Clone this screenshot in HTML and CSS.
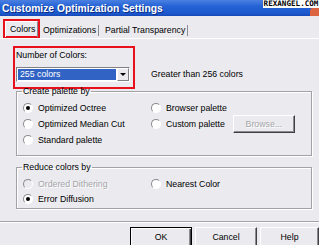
FILE: index.html
```html
<!DOCTYPE html>
<html lang="en">
<head>
<meta charset="UTF-8">
<meta name="viewport" content="width=device-width, initial-scale=1.0">
<title>Customize Optimization Settings</title>
<link rel="stylesheet" href="styles.css">
</head>
<body>
<div class="titlebar">
    <span class="title">Customize Optimization Settings</span>
    <span class="watermark">REXANGEL.COM</span>
    <span class="close"></span>
</div>
<div class="tabs">
    <div class="mark tabmark"><div class="tab active">Colors</div></div>
    <div class="tab first">Optimizations</div>
    <div class="tab">Partial Transparency</div>
</div>
<div class="panel">
    <div class="numrow">
        <div class="mark numbox">
            <div class="numlabel">Number of Colors:</div>
            <div class="combo">
                <div class="combo-value">255 colors</div>
                <div class="combo-arrow"><span class="tri"></span></div>
            </div>
        </div>
        <div class="hint">Greater than 256 colors</div>
    </div>
    <fieldset class="group palette">
        <legend>Create palette by</legend>
        <div class="opts">
            <div class="opt"><span class="radio on"></span>Optimized Octree</div>
            <div class="opt"><span class="radio"></span>Browser palette</div>
            <div class="opt"><span class="radio"></span>Optimized Median Cut</div>
            <div class="opt"><span class="radio"></span>Custom palette<span class="btn browse">Browse...</span></div>
            <div class="opt"><span class="radio"></span>Standard palette</div>
        </div>
    </fieldset>
    <fieldset class="group reduce">
        <legend>Reduce colors by</legend>
        <div class="opts">
            <div class="opt disabled"><span class="radio"></span>Ordered Dithering</div>
            <div class="opt"><span class="radio"></span>Nearest Color</div>
            <div class="opt"><span class="radio on"></span>Error Diffusion</div>
        </div>
    </fieldset>
</div>
<div class="separator"></div>
<div class="buttons">
    <div class="btn default">OK</div>
    <div class="btn">Cancel</div>
    <div class="btn">Help</div>
</div>
</body>
</html>
```

FILE: styles.css
```css
body {
    margin: 0;
    width: 319px;
    height: 245px;
    overflow: hidden;
    background: #ebebef;
    font-family: "Liberation Sans", Arial, sans-serif;
    font-size: 8.75px;
    color: #000;
}
.titlebar {
    position: relative;
    height: 16px;
    display: flex;
    align-items: center;
    padding-left: 2px;
    background: linear-gradient(#4a80e0, #2462d6 40%, #1c58cc 85%, #1648b8);
}
.title {
    color: #fff;
    font-weight: bold;
    font-size: 10.3px;
    text-shadow: 1px 1px 0 #0c2f86;
}
.watermark {
    position: absolute;
    top: 0;
    right: 0;
    width: 56px;
    height: 8px;
    background: #fff;
    color: #000;
    font-family: "DejaVu Sans Mono", monospace;
    font-weight: bold;
    font-size: 7.6px;
    line-height: 8px;
    text-align: center;
}
.close {
    position: absolute;
    right: 0;
    top: 8px;
    width: 9px;
    height: 8px;
    background: #dc6440;
    border-radius: 3px 0 0 0;
}
.tabs {
    display: flex;
    align-items: flex-end;
    height: 19px;
    margin-top: 3px;
    padding-left: 3px;
}
.mark {
    border: 2px solid #e8101a;
    box-sizing: border-box;
}
.tabmark {
    height: 19px;
    width: 37px;
}
.tab {
    height: 11px;
    line-height: 11px;
    padding: 0 2px 0 6px;
    border-right: 1px solid #8c8c90;
    margin-bottom: 2px;
    white-space: nowrap;
}
.tab.first {
    padding-left: 3px;
}
.tab.active {
    height: 15px;
    line-height: 14px;
    margin: 0;
    padding: 0 0 0 4px;
    border-left: 1px solid #fff;
    border-top: 1px solid #fff;
    border-right: 1px solid #8c8c90;
}
.panel {
    border-top: 1px solid #fff;
    padding: 7px 0 0 13px;
}
.numrow {
    display: flex;
    align-items: flex-start;
}
.numbox {
    width: 122px;
    height: 43px;
    padding: 2px 0 0 1px;
}
.numlabel {
    line-height: 10px;
}
.combo {
    display: flex;
    width: 114px;
    height: 15px;
    margin-top: 7px;
    box-sizing: border-box;
    border: 1px solid;
    border-color: #808084 #fff #fff #808084;
    background: #fff;
}
.combo-value {
    flex: 1;
    margin: 1px;
    background: #3163c4;
    color: #fff;
    line-height: 11px;
    padding-left: 2px;
}
.combo-arrow {
    width: 12px;
    display: flex;
    align-items: center;
    justify-content: center;
    background: #ebebef;
    box-sizing: border-box;
    border: 1px solid;
    border-color: #fff #808084 #808084 #fff;
}
.tri {
    border-left: 3px solid transparent;
    border-right: 3px solid transparent;
    border-top: 3px solid #000;
}
.hint {
    margin: 23px 0 0 16px;
    line-height: 10px;
}
.group {
    width: 296px;
    box-sizing: border-box;
    margin: 0 0 0 3px;
    border: 1px solid #a2a2a6;
    box-shadow: 1px 1px 0 #fff, inset 1px 1px 0 #fff;
}
.group legend {
    line-height: 9px;
    padding: 0 1px;
    margin-left: -1px;
}
.palette {
    margin-top: -2px;
    padding: 4px 0 7px 6px;
}
.reduce {
    margin-top: 7px;
    padding: 4px 0 2px 6px;
}
.opts {
    display: grid;
    grid-template-columns: 128px 1fr;
}
.opt {
    display: flex;
    align-items: center;
    height: 16px;
    white-space: nowrap;
}
.reduce .opt {
    height: 15px;
}
.radio {
    width: 10px;
    height: 10px;
    box-sizing: border-box;
    border-radius: 50%;
    border: 1px solid;
    border-color: #8a8a8e #fff #fff #8a8a8e;
    background: #fff;
    margin-right: 5px;
    display: flex;
    align-items: center;
    justify-content: center;
}
.radio.on::after {
    content: "";
    width: 4px;
    height: 4px;
    border-radius: 50%;
    background: #000;
}
.opt.disabled {
    color: #a4a4a8;
    text-shadow: 1px 1px 0 #fff;
}
.opt.disabled .radio {
    background: #ebebef;
}
.btn {
    display: flex;
    align-items: center;
    justify-content: center;
    box-sizing: border-box;
    border: 1px solid;
    border-color: #fff #404044 #404044 #fff;
    box-shadow: inset -1px -1px 0 #8c8c90;
    background: #ebebef;
}
.browse {
    width: 62px;
    height: 18px;
    margin-left: 8px;
    color: #a4a4a8;
    text-shadow: 1px 1px 0 #fff;
}
.separator {
    margin-top: 12px;
    border-top: 1px solid #a2a2a6;
    border-bottom: 1px solid #fff;
}
.buttons {
    display: flex;
    justify-content: flex-end;
    gap: 3px;
    margin-top: 4px;
}
.buttons .btn {
    width: 62px;
    height: 22px;
    padding-bottom: 3px;
}
.buttons .btn:last-child {
    width: 59px;
}
.buttons .btn.default {
    border: 1px solid #000;
    box-shadow: inset 1px 1px 0 #fff, inset -1px -1px 0 #404044, inset -2px -2px 0 #8c8c90;
}
```
